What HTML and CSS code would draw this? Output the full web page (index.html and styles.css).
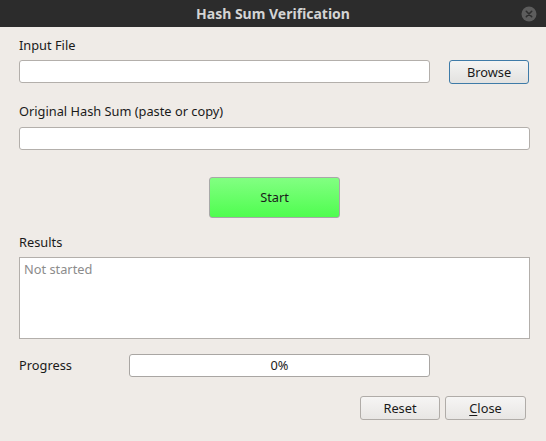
FILE: index.html
```html
<!DOCTYPE html>
<html>
<head>
<meta charset="utf-8">
<link rel="stylesheet" href="styles.css">
</head>
<body>
<div class="window">
  <div class="titlebar">
    <span class="title">Hash Sum Verification</span>
    <span class="close-icon">
      <svg width="16" height="16" viewBox="0 0 16 16"><circle cx="8" cy="8" r="7.5" fill="#5d5d5d"/><path d="M5.3 5.3 L10.7 10.7 M10.7 5.3 L5.3 10.7" stroke="#2e2e2e" stroke-width="1.6" stroke-linecap="round"/></svg>
    </span>
  </div>
  <div class="content">
    <div class="label l-input">Input File</div>
    <div class="row-file">
      <div class="field field-file"></div>
      <div class="btn btn-browse">Browse</div>
    </div>
    <div class="label l-hash">Original Hash Sum (paste or copy)</div>
    <div class="field field-hash"></div>
    <div class="start-wrap"><div class="btn btn-start">Start</div></div>
    <div class="label l-results">Results</div>
    <div class="results"><span class="placeholder">Not started</span></div>
    <div class="row-progress">
      <div class="label l-progress">Progress</div>
      <div class="progress">0%</div>
    </div>
    <div class="row-buttons">
      <div class="btn btn-plain btn-reset">Reset</div>
      <div class="btn btn-plain btn-close"><u>C</u>lose</div>
    </div>
  </div>
</div>
</body>
</html>
```
FILE: styles.css
```css
html, body { margin: 0; padding: 0; }
body {
  width: 546px; height: 441px; overflow: hidden;
  background: #efebe7;
  font-family: "Noto Sans", "DejaVu Sans", sans-serif;
  font-size: 12.8px;
  color: #1a1a1a;
}
.window { display: flex; flex-direction: column; height: 441px; }
.titlebar {
  height: 27px; background: #2c2c2c; position: relative;
  display: flex; align-items: center; justify-content: center;
}
.title { color: #d4d4d4; font-weight: bold; font-size: 14px; line-height: 27px; }
.close-icon { position: absolute; right: 9px; top: 6px; width: 16px; height: 16px; display: block; }
.close-icon svg { display: block; }
.content { display: flex; flex-direction: column; padding: 0 16px 0 19px; }
.label { line-height: 16px; height: 16px; }
.l-input { margin-top: 10px; }
.row-file { display: flex; margin-top: 7px; height: 24px; }
.field {
  background: #fff; border: 1px solid #b3afab; border-radius: 3px; box-sizing: border-box;
}
.field-file { width: 411px; height: 23px; }
.btn {
  box-sizing: border-box; display: flex; align-items: center; justify-content: center;
  border-radius: 3px; padding-bottom: 1px;
}
.btn-browse {
  margin-left: 19px; width: 80px; height: 24px;
  border: 1px solid #3e7ba8;
  background: linear-gradient(#f4f4f3, #e3e2e0);
}
.l-hash { margin-top: 19px; }
.field-hash { margin-top: 8px; width: 511px; height: 23px; }
.start-wrap { display: flex; justify-content: center; margin-top: 27px; width: 511px; }
.btn-start {
  width: 131px; height: 41px; border: 1px solid #a8a8a8;
  background: linear-gradient(#82ff82, #4ffd4f);
}
.l-results { margin-top: 16px; }
.results {
  margin-top: 7px; width: 511px; height: 82px; box-sizing: border-box;
  background: #fff; border: 1px solid #b3afab; padding: 2px 4px;
}
.placeholder { color: #8c8c8c; line-height: 16px; }
.row-progress { display: flex; align-items: center; margin-top: 14px; height: 24px; }
.l-progress { width: 110px; margin-top: -1px; }
.progress {
  width: 301px; height: 23px; box-sizing: border-box;
  background: #fff; border: 1px solid #a9a6a3; border-radius: 3px;
  display: flex; align-items: center; justify-content: center;
}
.row-buttons { display: flex; justify-content: flex-end; margin-top: 19px; gap: 5px; padding-right: 4px; }
.btn-plain {
  height: 24px; border: 1px solid #b0aca8;
  background: linear-gradient(#f6f5f4, #e8e6e4);
}
.btn-reset { width: 80px; }
.btn-close { width: 81px; }
.btn-close u { text-decoration: underline; text-underline-offset: 2px; }
```
